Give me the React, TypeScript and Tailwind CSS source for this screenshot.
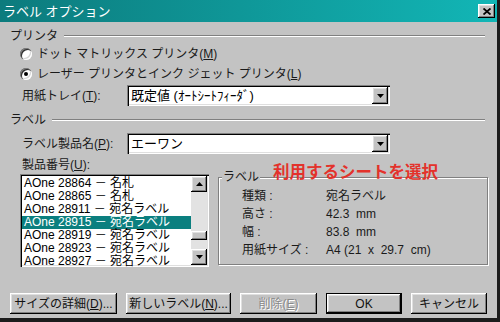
import React from "react"

const raised =
  "shadow-[inset_-1px_-1px_0_#000,inset_1px_1px_0_#fff,inset_-2px_-2px_0_#808080,inset_2px_2px_0_#dfdfdf]"
const sunken =
  "shadow-[inset_1px_1px_0_#808080,inset_2px_2px_0_#000,inset_-1px_-1px_0_#fff,inset_-2px_-2px_0_#dfdfdf]"

function Radio({ checked }: { checked?: boolean }) {
  return (
    <span className="flex h-[12px] w-[12px] shrink-0 items-center justify-center rounded-full bg-white shadow-[inset_1px_1px_0_#808080,inset_2px_2px_0_#303030,inset_-1px_-1px_0_#fff,inset_-2px_-2px_0_#d4d4d4]">
      {checked && <span className="h-[4px] w-[4px] rounded-full bg-black" />}
    </span>
  )
}

function DownArrow() {
  return (
    <svg width="7" height="4" viewBox="0 0 7 4">
      <path d="M0 0h7L3.5 4z" fill="#000" />
    </svg>
  )
}

function UpArrow() {
  return (
    <svg width="7" height="4" viewBox="0 0 7 4">
      <path d="M0 4h7L3.5 0z" fill="#000" />
    </svg>
  )
}

function Combo({ children }: { children: React.ReactNode }) {
  return (
    <div className={`flex h-[21px] w-[263px] items-center bg-white p-[2px] ${sunken}`}>
      <span className="flex-1 pl-[2px] text-[13px] leading-none text-black">{children}</span>
      <span className={`flex h-[17px] w-[16px] items-center justify-center bg-[#c3c3c3] ${raised}`}>
        <DownArrow />
      </span>
    </div>
  )
}

function Heading({ label }: { label: string }) {
  return (
    <div className="flex h-[14px] items-center gap-[6px] pr-[12px]">
      <span className="text-[12px] leading-none">{label}</span>
      <div className="h-[2px] flex-1 border-t border-b border-t-[#808080] border-b-white" />
    </div>
  )
}

function Button({ children, w, isDefault, disabled }: { children: React.ReactNode; w: string; isDefault?: boolean; disabled?: boolean }) {
  return (
    <div className={`${w} h-[21px] ${isDefault ? "border border-black" : ""}`}>
      <div
        className={`flex h-full w-full items-center justify-center text-[12px] leading-none ${raised} ${
          disabled ? "text-[#8a8a8a] [text-shadow:1px_1px_0_#fff]" : "text-[#111]"
        }`}
      >
        {children}
      </div>
    </div>
  )
}

const items = [
  "AOne 28864 － 名札",
  "AOne 28865 － 名札",
  "AOne 28911 － 宛名ラベル",
  "AOne 28915 － 宛名ラベル",
  "AOne 28919 － 宛名ラベル",
  "AOne 28923 － 宛名ラベル",
  "AOne 28927 － 宛名ラベル",
]

const details = [
  ["種類 :", "宛名ラベル"],
  ["高さ :", "42.3  mm"],
  ["幅 :", "83.8  mm"],
  ["用紙サイズ :", "A4 (21  x  29.7  cm)"],
]

export default function App() {
  return (
    <div className="flex h-[322px] w-[500px] flex-col border-r-[3px] border-b-[4px] border-[#1c1c1c] bg-[#c3c3c3] font-['Liberation_Sans','Noto_Sans_CJK_JP',sans-serif] text-[#1a1a1a]">
      {/* タイトルバー */}
      <div className="flex h-[22px] shrink-0 items-center justify-between bg-gradient-to-r from-[#0c7b7d] to-[#12b6b6] pl-[3px] pr-[2px]">
        <span className="text-[13px] leading-none text-white">ラベル オプション</span>
        <span className={`flex h-[14px] w-[17px] items-center justify-center bg-[#c3c3c3] ${raised}`}>
          <svg width="8" height="7" viewBox="0 0 8 7">
            <path d="M0.5 0.5L7.5 6.5M7.5 0.5L0.5 6.5" stroke="#000" strokeWidth="1.8" />
          </svg>
        </span>
      </div>

      <div className="flex flex-1 flex-col pl-[10px]">
        {/* プリンタ */}
        <div className="mt-[7px]">
          <Heading label="プリンタ" />
        </div>
        <div className="mt-[3px] flex h-[16px] items-center gap-[5px] pl-[10px] text-[12px] leading-none">
          <Radio />
          <span>
            ドット マトリックス プリンタ(<u>M</u>)
          </span>
        </div>
        <div className="mt-[4px] flex h-[16px] items-center gap-[5px] pl-[10px] text-[12px] leading-none">
          <Radio checked />
          <span>
            レーザー プリンタとインク ジェット プリンタ(<u>L</u>)
          </span>
        </div>
        <div className="mt-[3px] flex items-center pl-[12px]">
          <span className="w-[105px] text-[12px] leading-none">
            用紙トレイ(<u>T</u>):
          </span>
          <Combo>既定値 (ｵｰﾄｼｰﾄﾌｨｰﾀﾞ)</Combo>
        </div>

        {/* ラベル */}
        <div className="mt-[7px]">
          <Heading label="ラベル" />
        </div>
        <div className="mt-[6px] flex items-center pl-[12px]">
          <span className="w-[105px] text-[12px] leading-none">
            ラベル製品名(<u>P</u>):
          </span>
          <Combo>エーワン</Combo>
        </div>
        <div className="mt-[4px] flex h-[14px] items-center pl-[12px] text-[12px] leading-none">
          <span>
            製品番号(<u>U</u>):
          </span>
        </div>

        <div className="mt-[2px] flex items-start gap-[9px] pl-[10px]">
          {/* 製品リスト */}
          <div className={`flex h-[93px] w-[189px] bg-white p-[2px] ${sunken}`}>
            <div className="flex flex-1 flex-col pt-[1px]">
              {items.map((it, i) => (
                <div
                  key={it}
                  className={`h-[13px] pl-[2px] text-[12px] leading-[13px] whitespace-nowrap ${
                    i === 3 ? "bg-[#0b7f7f] text-white" : "text-black"
                  }`}
                >
                  {it}
                </div>
              ))}
            </div>
            <div className="flex w-[16px] flex-col bg-[#e2e2e2]">
              <span className={`flex h-[16px] items-center justify-center bg-[#c3c3c3] ${raised}`}>
                <UpArrow />
              </span>
              <div className="flex-1 pt-[39px]">
                <div className={`h-[9px] bg-[#c3c3c3] ${raised}`} />
              </div>
              <span className={`flex h-[16px] items-center justify-center bg-[#c3c3c3] ${raised}`}>
                <DownArrow />
              </span>
            </div>
          </div>

          {/* ラベル詳細 */}
          <div className="relative mt-[3px] h-[88px] w-[270px] border border-[#808080] shadow-[1px_1px_0_#fff,inset_1px_1px_0_#fff]">
            <span className="absolute -top-[8px] left-[3px] bg-[#c3c3c3] px-[1px] text-[12px] leading-[14px]">ラベル</span>
            <span className="absolute -top-[16px] left-[54px] text-[16.5px] leading-[20px] font-semibold text-[#e3322b]">
              利用するシートを選択
            </span>
            <div className="flex flex-col gap-[5px] pt-[11px] pl-[23px]">
              {details.map(([k, v]) => (
                <div key={k} className="flex h-[13px] items-center text-[12px] leading-none">
                  <span className="w-[84px]">{k}</span>
                  <span className="whitespace-pre">{v}</span>
                </div>
              ))}
            </div>
          </div>
        </div>

        {/* ボタン */}
        <div className="mt-[26px] flex gap-[9px]">
          <Button w="w-[107px]">
            サイズの詳細(<u>D</u>)...
          </Button>
          <Button w="w-[105px]">
            新しいラベル(<u>N</u>)...
          </Button>
          <Button w="w-[77px]" disabled>
            削除(<u>E</u>)
          </Button>
          <Button w="w-[76px]" isDefault>
            OK
          </Button>
          <Button w="w-[76px]">キャンセル</Button>
        </div>
      </div>
    </div>
  )
}
